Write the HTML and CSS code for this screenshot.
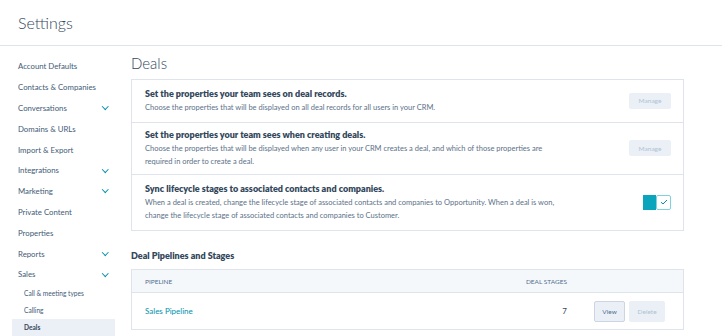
FILE: index.html
```html
<!DOCTYPE html>
<html lang="en">
<head>
    <meta charset="UTF-8">
    <meta name="viewport" content="width=device-width, initial-scale=1.0">
    <title>Settings</title>
    <link rel="stylesheet" href="styles.css">
</head>
<body>
    <header class="page-header">
        <h1>Settings</h1>
    </header>

    <div class="layout">
        <nav class="sidebar">
            <a class="nav-item">Account Defaults</a>
            <a class="nav-item">Contacts &amp; Companies</a>
            <a class="nav-item has-sub">Conversations <span class="chevron"></span></a>
            <a class="nav-item">Domains &amp; URLs</a>
            <a class="nav-item">Import &amp; Export</a>
            <a class="nav-item has-sub">Integrations <span class="chevron"></span></a>
            <a class="nav-item has-sub">Marketing <span class="chevron"></span></a>
            <a class="nav-item">Private Content</a>
            <a class="nav-item">Properties</a>
            <a class="nav-item has-sub">Reports <span class="chevron"></span></a>
            <a class="nav-item has-sub">Sales <span class="chevron"></span></a>
            <a class="sub-item">Call &amp; meeting types</a>
            <a class="sub-item">Calling</a>
            <a class="sub-item active">Deals</a>
        </nav>

        <main class="content">
            <h2 class="section-title">Deals</h2>

            <div class="card">
                <div class="card-row">
                    <div class="row-text">
                        <h3>Set the properties your team sees on deal records.</h3>
                        <p>Choose the properties that will be displayed on all deal records for all users in your CRM.</p>
                    </div>
                    <button class="btn btn-disabled">Manage</button>
                </div>
                <div class="card-row">
                    <div class="row-text">
                        <h3>Set the properties your team sees when creating deals.</h3>
                        <p>Choose the properties that will be displayed when any user in your CRM creates a deal, and which of those properties are required in order to create a deal.</p>
                    </div>
                    <button class="btn btn-disabled">Manage</button>
                </div>
                <div class="card-row">
                    <div class="row-text">
                        <h3>Sync lifecycle stages to associated contacts and companies.</h3>
                        <p>When a deal is created, change the lifecycle stage of associated contacts and companies to Opportunity. When a deal is won, change the lifecycle stage of associated contacts and companies to Customer.</p>
                    </div>
                    <div class="toggle">
                        <span class="toggle-on"></span>
                        <span class="toggle-knob">
                            <svg width="8" height="6" viewBox="0 0 8 6"><path d="M1 3.2 L3 5 L7 1" fill="none" stroke="#0091ae" stroke-width="1"/></svg>
                        </span>
                    </div>
                </div>
            </div>

            <h4 class="sub-title">Deal Pipelines and Stages</h4>

            <table class="pipelines">
                <thead>
                    <tr>
                        <th class="col-name">Pipeline</th>
                        <th class="col-stages">Deal Stages</th>
                        <th class="col-actions"></th>
                    </tr>
                </thead>
                <tbody>
                    <tr>
                        <td class="col-name"><a class="link">Sales Pipeline</a></td>
                        <td class="col-stages num">7</td>
                        <td class="col-actions">
                            <button class="btn btn-view">View</button>
                            <button class="btn btn-disabled btn-delete">Delete</button>
                        </td>
                    </tr>
                </tbody>
            </table>
        </main>
    </div>
</body>
</html>
```

FILE: styles.css
```css
body {
    margin: 0;
    height: 336px;
    overflow: hidden;
    background-color: #fff;
    font-family: Lato, "Open Sans", Arial, sans-serif;
    color: #33475b;
}

.page-header {
    height: 45px;
    border-bottom: 1px solid #dfe3eb;
    display: flex;
    align-items: center;
    padding-left: 18px;
}

.page-header h1 {
    margin: 0;
    font-size: 16px;
    font-weight: 300;
    color: #33475b;
}

.layout {
    display: flex;
}

.sidebar {
    width: 103px;
    margin-left: 12px;
    padding-top: 10px;
    display: flex;
    flex-direction: column;
}

.nav-item {
    height: 20.8px;
    padding-left: 6px;
    padding-right: 8px;
    display: flex;
    align-items: center;
    justify-content: space-between;
    font-size: 7.8px;
    color: #425b76;
}

.chevron {
    width: 3.5px;
    height: 3.5px;
    border-right: 1.3px solid #0091ae;
    border-bottom: 1.3px solid #0091ae;
    transform: rotate(45deg);
    margin-top: -3px;
}

.sub-item {
    height: 17px;
    padding-left: 12px;
    display: flex;
    align-items: center;
    font-size: 6.6px;
    color: #425b76;
}

.sub-item.active {
    background-color: #eaf0f6;
    font-weight: 700;
    color: #33475b;
}

.content {
    flex: 1;
    padding-left: 16px;
    margin-right: 38px;
}

.section-title {
    margin: 8px 0 7px;
    font-size: 15px;
    font-weight: 300;
    line-height: 18px;
}

.card {
    border: 1px solid #dfe3eb;
}

.card-row {
    display: flex;
    align-items: center;
    justify-content: space-between;
    padding: 7px 12px 8px 13px;
    border-top: 1px solid #dfe3eb;
}

.card-row:first-child {
    border-top: none;
}

.card-row:nth-child(2) {
    padding-top: 5px;
    padding-bottom: 6px;
}

.card-row:last-child {
    padding-bottom: 8px;
}

.row-text {
    width: 425px;
}

.row-text h3 {
    margin: 0;
    font-size: 9px;
    font-weight: 800;
    line-height: 14px;
    color: #33475b;
}

.row-text p {
    margin: 0;
    font-size: 7.5px;
    line-height: 13px;
    color: #5b7189;
}

.btn {
    font-family: inherit;
    border-radius: 2px;
    cursor: pointer;
}

.btn-disabled {
    background-color: #eaf0f6;
    border: 1px solid #eaf0f6;
    color: #b0c1d4;
    font-size: 6.5px;
    width: 42px;
    height: 16px;
    padding: 0;
}

.toggle {
    display: flex;
    width: 28px;
    height: 15px;
}

.toggle-on {
    width: 13px;
    background-color: #0aa5bd;
}

.toggle-knob {
    flex: 1;
    display: flex;
    align-items: center;
    justify-content: center;
    border: 1px solid #7fd1de;
    border-radius: 2px;
    background: #fff;
}

.sub-title {
    margin: 19px 0 7px;
    font-size: 9px;
    font-weight: 800;
    line-height: 12px;
}

.pipelines {
    width: 100%;
    border-collapse: collapse;
    border: 1px solid #dfe3eb;
}

.pipelines th {
    height: 22px;
    padding: 0;
    background-color: #f5f8fa;
    font-size: 6.5px;
    font-weight: 400;
    text-transform: uppercase;
    color: #516f90;
    text-align: left;
    border-bottom: 1px solid #dfe3eb;
}

.pipelines td {
    height: 36px;
    padding: 0;
    font-size: 8px;
    border-bottom: 1px solid #dfe3eb;
}

.pipelines .col-name {
    padding-left: 13px;
}

.pipelines .col-stages {
    width: 80px;
    text-align: right;
}

.num {
    color: #33475b;
}

.pipelines .col-actions {
    width: 89px;
    text-align: left;
    padding-left: 27px;
}

.link {
    color: #0091ae;
}

.btn-view {
    background-color: #eaf0f6;
    border: 1px solid #cbd6e2;
    color: #506e91;
    font-size: 6.5px;
    width: 31px;
    height: 21px;
    padding: 0;
}

.btn-delete {
    width: 36px;
    height: 21px;
    margin-left: 2px;
}
```
